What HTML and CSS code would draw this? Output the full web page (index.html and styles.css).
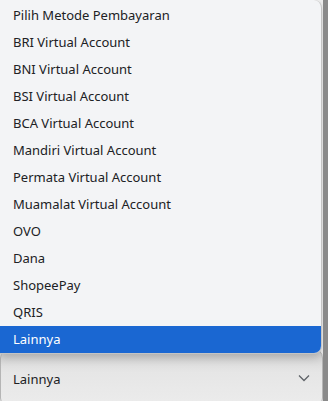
FILE: index.html
```html
<!DOCTYPE html>
<html lang="id">
  <head>
    <meta charset="UTF-8" />
    <meta name="viewport" content="width=device-width, initial-scale=1.0" />
    <title>Metode Pembayaran</title>
    <link rel="stylesheet" href="styles.css">
  </head>
  <body>
    <div class="frame">
      <ul class="popup">
        <li class="option">Pilih Metode Pembayaran</li>
        <li class="option">BRI Virtual Account</li>
        <li class="option">BNI Virtual Account</li>
        <li class="option">BSI Virtual Account</li>
        <li class="option">BCA Virtual Account</li>
        <li class="option">Mandiri Virtual Account</li>
        <li class="option">Permata Virtual Account</li>
        <li class="option">Muamalat Virtual Account</li>
        <li class="option">OVO</li>
        <li class="option">Dana</li>
        <li class="option">ShopeePay</li>
        <li class="option">QRIS</li>
        <li class="option selected">Lainnya</li>
      </ul>
      <div class="select">
        <span>Lainnya</span>
        <svg class="chevron" width="12" height="8" viewBox="0 0 12 8">
          <path d="M1 1.5 L6 6.5 L11 1.5" fill="none" stroke="#5f6368" stroke-width="1.3" />
        </svg>
      </div>
    </div>
  </body>
</html>
```

FILE: styles.css
```css
body {
  margin: 0;
  height: 401px;
  overflow: hidden;
  background: #8a8a8a;
  font-family: "Noto Sans", "Open Sans", sans-serif;
  font-size: 13px;
  color: #202124;
}
.frame {
  width: 323px;
  height: 401px;
  background: #f0f0f0;
  overflow: hidden;
}
.popup {
  position: relative;
  z-index: 2;
  list-style: none;
  margin: 0;
  padding: 2px 0 0;
  width: 321px;
  background: #f3f4f6;
  border: 1px solid #c4c4c4;
  border-top: none;
  border-left: none;
  border-radius: 0 8px 8px 0;
  box-shadow: 0 4px 8px rgba(0, 0, 0, 0.18);
  overflow: hidden;
}
.option {
  height: 27px;
  line-height: 27px;
  padding-left: 13px;
  white-space: nowrap;
}
.option.selected {
  background: #1a67d2;
  color: #fff;
}
.select {
  position: relative;
  z-index: 1;
  margin-top: -6px;
  height: 60px;
  box-sizing: border-box;
  padding: 8px 12px 6px 12px;
  display: flex;
  align-items: center;
  justify-content: space-between;
  background: linear-gradient(#cfcfcf, #e6e6e6 40%, #ececec);
  border: 1px solid #b5b5b5;
  border-radius: 10px;
}
.chevron {
  margin-top: -3px;
}
```
